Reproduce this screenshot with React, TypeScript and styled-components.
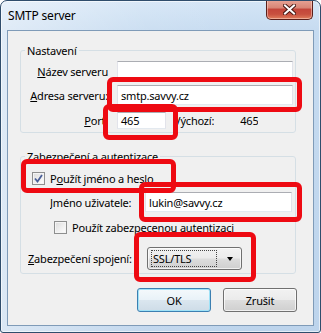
import styled, { createGlobalStyle } from "styled-components";

const GlobalStyle = createGlobalStyle`
  html, body {
    margin: 0;
    padding: 0;
    background: #ffffff;
  }
  * {
    box-sizing: border-box;
  }
`;

const FONT = `"Noto Sans", "Open Sans", Arial, sans-serif`;

interface MarkBox {
  x: number;
  y: number;
  w: number;
  h: number;
}

const marks: MarkBox[] = [
  { x: 107, y: 77, w: 195, h: 35 },
  { x: 103, y: 104, w: 75, h: 36 },
  { x: 21, y: 159, w: 155, h: 34 },
  { x: 139, y: 182, w: 163, h: 40 },
  { x: 134, y: 232, w: 122, h: 50 },
];

export default function App() {
  return (
    <>
      <GlobalStyle />
      <Window>
        <TitleBar>
          <Title>SMTP server</Title>
          <CloseButton>
            <svg width="13" height="11" viewBox="0 0 13 11">
              <path
                d="M2 1.5 L11 9.5 M11 1.5 L2 9.5"
                stroke="#4a1a14"
                strokeWidth="4"
                strokeLinecap="square"
              />
              <path
                d="M2 1.5 L11 9.5 M11 1.5 L2 9.5"
                stroke="#ffffff"
                strokeWidth="2"
                strokeLinecap="square"
              />
            </svg>
          </CloseButton>
        </TitleBar>
        <Client>
          <Group>
            <Legend>Nastavení</Legend>
            <FieldGrid>
              <Label>
                <u>N</u>ázev serveru
              </Label>
              <TextBox />
              <Label>
                <u>A</u>dresa serveru:
              </Label>
              <TextBox>smtp.savvy.cz</TextBox>
              <Label $top={3}>
                <u>P</u>ort:
              </Label>
              <PortRow>
                <TextBox $width={49} $height={17}>
                  465
                </TextBox>
                <Plain $gap={8}>Výchozí:</Plain>
                <Plain $gap={26}>465</Plain>
              </PortRow>
            </FieldGrid>
          </Group>

          <Group $spaced>
            <Legend>Zabezpečení a autentizace</Legend>
            <SecurityBody>
              <CheckRow $indent={11} $top={6}>
                <CheckBox $checked>
                  <svg width="9" height="9" viewBox="0 0 9 9">
                    <path
                      d="M1 4.5 L3.5 7.5 L8 1"
                      fill="none"
                      stroke="#4a5f97"
                      strokeWidth="1.8"
                    />
                  </svg>
                </CheckBox>
                <span>
                  P<u>o</u>užít jméno a heslo
                </span>
              </CheckRow>
              <FieldRow $indent={29} $top={6} $label={95}>
                <Plain>
                  <u>J</u>méno uživatele:
                </Plain>
                <TextBox>lukin@savvy.cz</TextBox>
              </FieldRow>
              <CheckRow $indent={33} $top={7}>
                <CheckBox />
                <span>Použít zabezpecenou autentizaci</span>
              </CheckRow>
              <FieldRow $indent={7} $top={12} $label={119}>
                <Plain>
                  <u>Z</u>abezpečení spojení:
                </Plain>
                <Select>
                  <SelectValue>SSL/TLS</SelectValue>
                  <Arrow />
                </Select>
              </FieldRow>
            </SecurityBody>
          </Group>

          <ButtonRow>
            <Button $primary>OK</Button>
            <Button>Zrušit</Button>
          </ButtonRow>
        </Client>

        {marks.map((m, i) => (
          <Mark key={i} $x={m.x} $y={m.y} $w={m.w} $h={m.h} />
        ))}
      </Window>
    </>
  );
}

const Window = styled.div`
  position: relative;
  width: 321px;
  height: 333px;
  border: 1px solid #2f4d6c;
  border-radius: 7px 7px 3px 3px;
  background:
    linear-gradient(90deg, rgba(255, 255, 255, 0.45), rgba(255, 255, 255, 0.1) 45%, rgba(255, 255, 255, 0) 80%),
    linear-gradient(180deg, #d4e5f6 0%, #c6dbf0 30px, #bdd4ec 100%);
  box-shadow: inset 0 0 0 1px rgba(255, 255, 255, 0.6);
  display: flex;
  flex-direction: column;
  font-family: ${FONT};
  font-size: 11px;
  letter-spacing: -0.2px;
  color: #000;
  overflow: hidden;
`;

const TitleBar = styled.div`
  height: 29px;
  display: flex;
  align-items: flex-start;
  padding: 0 7px 0 7px;
`;

const Title = styled.div`
  margin-top: 7px;
  font-size: 12px;
  line-height: 16px;
  color: #000;
`;

const CloseButton = styled.div`
  margin-left: auto;
  width: 47px;
  height: 20px;
  margin-top: -1px;
  border: 1px solid #5a1f1a;
  border-top: none;
  border-radius: 0 0 5px 5px;
  background: linear-gradient(
    180deg,
    #e8a496 0%,
    #d98676 40%,
    #c4463a 50%,
    #c8503f 75%,
    #e07e5c 100%
  );
  box-shadow: inset 0 0 0 1px rgba(255, 220, 210, 0.5);
  display: flex;
  align-items: center;
  justify-content: center;
`;

const Client = styled.div`
  flex: 1;
  margin: 0 6px 6px 6px;
  border: 1px solid #7f9bb8;
  background: #f0f0f0;
  padding: 12px 0 0 12px;
  display: flex;
  flex-direction: column;
`;

const Group = styled.fieldset<{ $spaced?: boolean }>`
  width: 276px;
  margin: ${(p) => (p.$spaced ? "16px" : "0")} 0 0 0;
  padding: 0 2px 3px 0;
  border: 1px solid #d5dfe5;
  border-radius: 3px;
  min-width: 0;
`;

const Legend = styled.legend`
  margin-left: 4px;
  padding: 0 2px;
  font-size: 11px;
  line-height: 15px;
  color: #000;
`;

const FieldGrid = styled.div`
  display: grid;
  grid-template-columns: 87px 1fr;
  column-gap: 9px;
  row-gap: 4px;
  align-items: center;
  padding-top: 3px;
`;

const Label = styled.div<{ $top?: number }>`
  text-align: right;
  white-space: nowrap;
  margin-top: ${(p) => p.$top ?? 0}px;
`;

const TextBox = styled.div<{ $width?: number; $height?: number }>`
  ${(p) => (p.$width ? `width: ${p.$width}px;` : "")}
  height: ${(p) => p.$height ?? 20}px;
  background: #fff;
  border: 1px solid #e2e3ea;
  border-top-color: #abadb3;
  border-bottom-color: #e3e9ef;
  padding: 0 3px;
  display: flex;
  align-items: center;
  white-space: nowrap;
`;

const PortRow = styled.div`
  display: flex;
  align-items: center;
  margin-top: 3px;
`;

const Plain = styled.span<{ $gap?: number }>`
  margin-left: ${(p) => p.$gap ?? 0}px;
  white-space: nowrap;
  overflow: hidden;
`;

const SecurityBody = styled.div`
  display: flex;
  flex-direction: column;
`;

const CheckRow = styled.div<{ $indent: number; $top: number }>`
  display: flex;
  align-items: center;
  gap: 5px;
  height: 16px;
  padding-left: ${(p) => p.$indent}px;
  margin-top: ${(p) => p.$top}px;
  white-space: nowrap;
`;

const CheckBox = styled.span<{ $checked?: boolean }>`
  width: 13px;
  height: 13px;
  border: 1px solid #8e8f8f;
  background: linear-gradient(135deg, #dcdcdc, #ffffff);
  box-shadow: inset 0 0 0 1px #f4f4f4;
  display: flex;
  align-items: center;
  justify-content: center;
  flex: none;
`;

const FieldRow = styled.div<{ $indent: number; $top: number; $label: number }>`
  display: grid;
  grid-template-columns: ${(p) => p.$label}px auto;
  justify-content: start;
  align-items: center;
  padding-left: ${(p) => p.$indent}px;
  margin-top: ${(p) => p.$top}px;

  & > ${TextBox} {
    width: ${(p) => 271 - p.$indent - p.$label}px;
  }
`;

const Select = styled.div`
  width: 95px;
  height: 23px;
  border: 1px solid #707070;
  border-radius: 3px;
  background: linear-gradient(180deg, #f2f2f2 0%, #ebebeb 48%, #dddddd 52%, #cfcfcf 100%);
  box-shadow: inset 0 0 0 1px rgba(255, 255, 255, 0.7);
  display: flex;
  align-items: center;
  padding: 0 8px 0 3px;
`;

const SelectValue = styled.span`
  flex: 1;
  height: 17px;
  line-height: 15px;
  border: 1px dotted #444;
  padding: 0 1px;
  margin-right: 10px;
`;

const Arrow = styled.span`
  width: 0;
  height: 0;
  border-left: 3.5px solid transparent;
  border-right: 3.5px solid transparent;
  border-top: 4px solid #000;
`;

const ButtonRow = styled.div`
  display: flex;
  justify-content: flex-end;
  gap: 12px;
  margin-top: 14px;
  padding-right: 16px;
`;

const Button = styled.div<{ $primary?: boolean }>`
  width: 74px;
  height: 24px;
  border: 1px solid ${(p) => (p.$primary ? "#3c7fb1" : "#707070")};
  border-radius: 3px;
  background: ${(p) =>
    p.$primary
      ? "linear-gradient(180deg, #f4f9fc 0%, #e9f2f8 48%, #dae6ef 52%, #cedce7 100%)"
      : "linear-gradient(180deg, #f2f2f2 0%, #ebebeb 48%, #dddddd 52%, #cfcfcf 100%)"};
  box-shadow: inset 0 0 0 1px ${(p) => (p.$primary ? "#9fe2f7" : "rgba(255,255,255,0.7)")};
  display: flex;
  align-items: center;
  justify-content: center;
`;

const Mark = styled.div<{ $x: number; $y: number; $w: number; $h: number }>`
  position: absolute;
  left: ${(p) => p.$x - 1}px;
  top: ${(p) => p.$y - 1}px;
  width: ${(p) => p.$w}px;
  height: ${(p) => p.$h}px;
  border: 5px solid #ee0a12;
  border-radius: 6px;
  pointer-events: none;
`;
